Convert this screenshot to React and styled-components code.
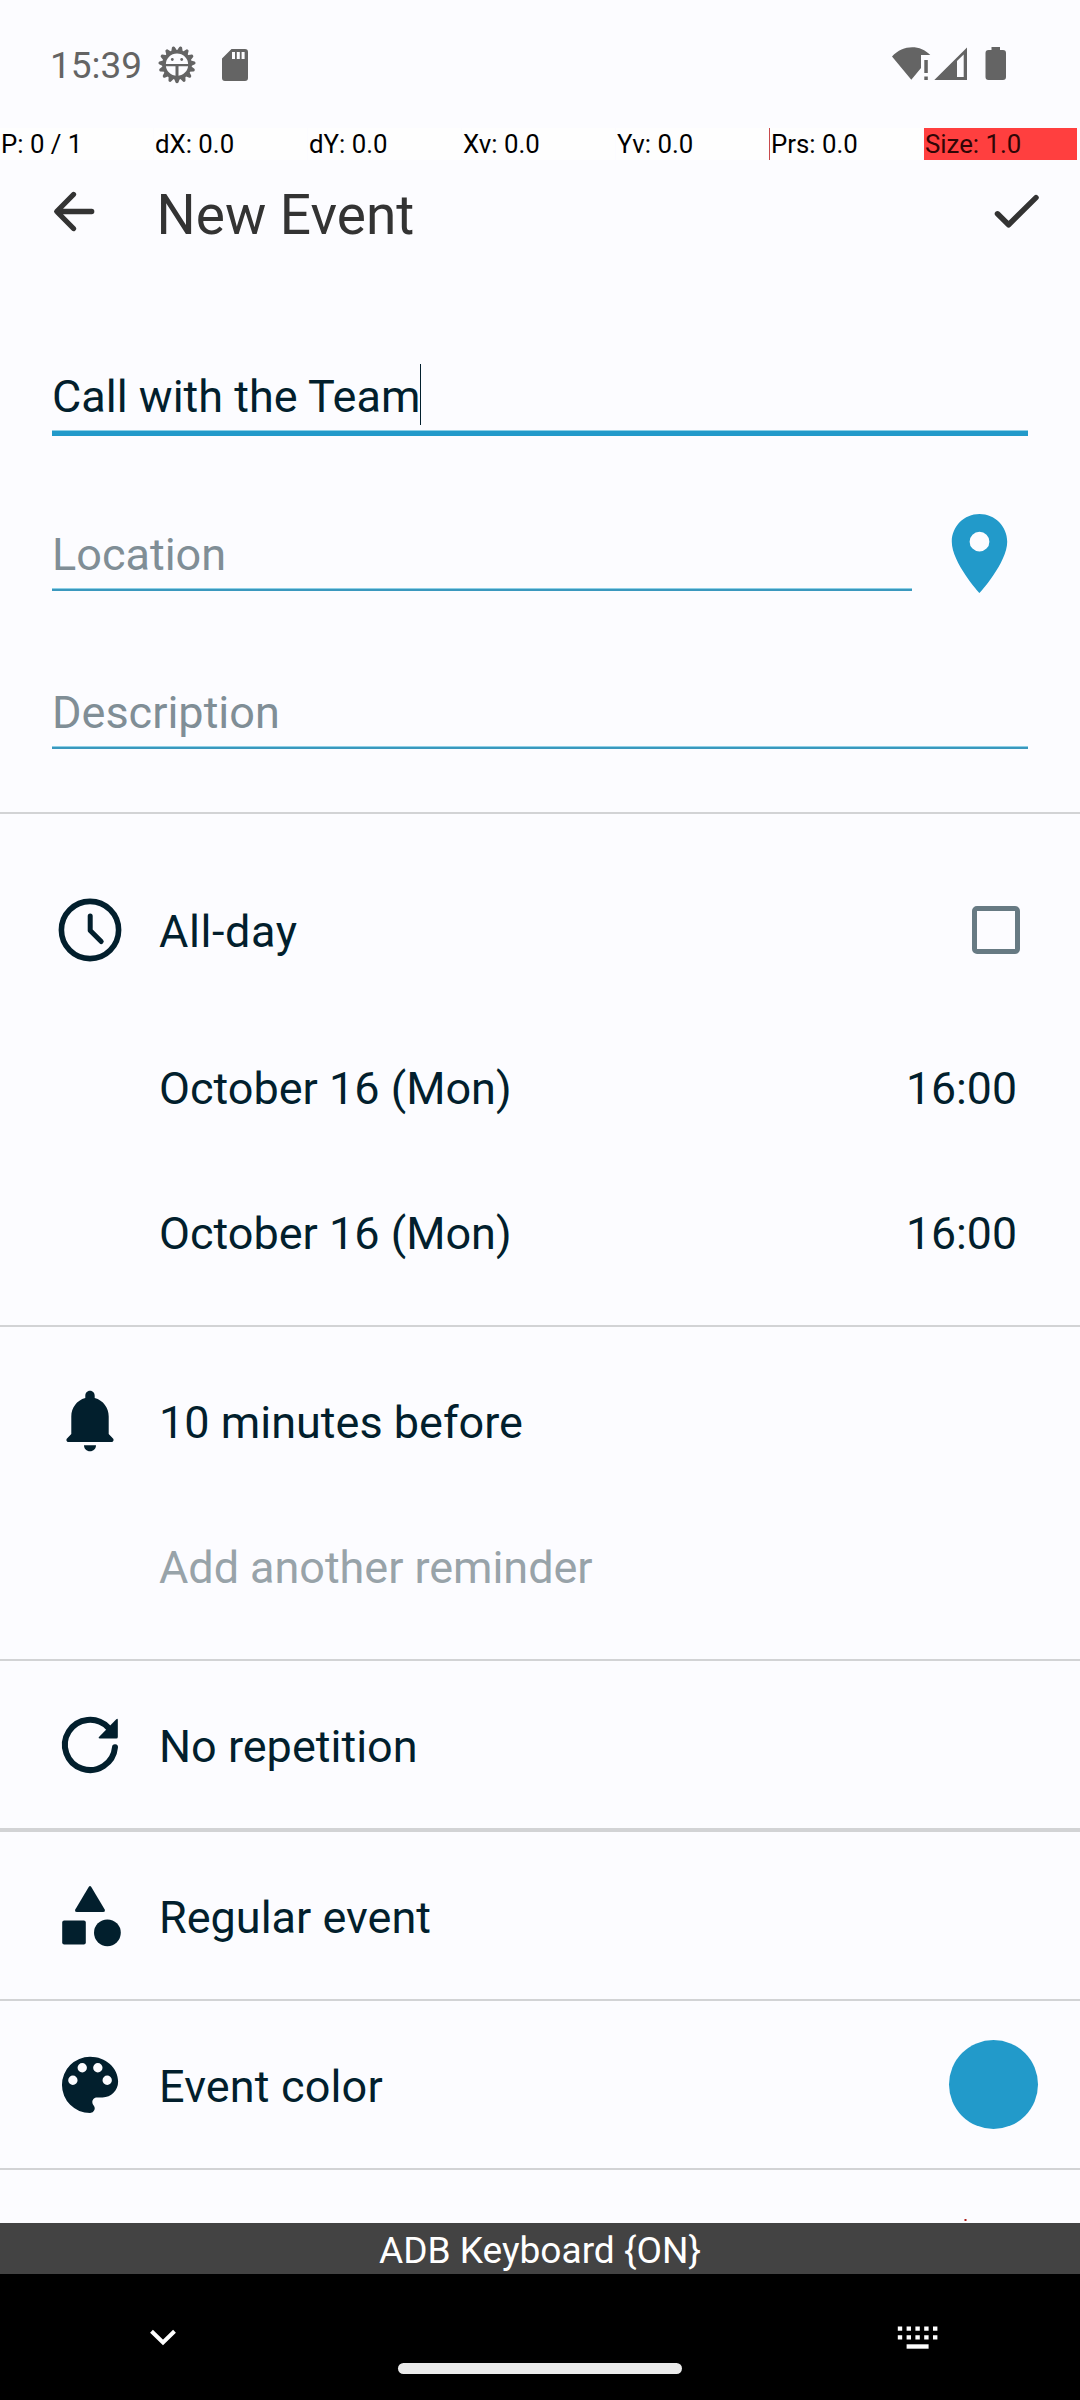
import React from 'react';
import styled, { createGlobalStyle } from 'styled-components';

const GlobalStyle = createGlobalStyle`
  * { box-sizing: border-box; }
  body { margin: 0; background: #fcfcff; }
`;

const ACCENT = '#229aca';
const INK = '#021f2d';

const Screen = styled.div`
  width: 1080px;
  height: 2400px;
  display: flex;
  flex-direction: column;
  overflow: hidden;
  background: #fcfcff;
  color: ${INK};
  font-family: Roboto, 'Liberation Sans', sans-serif;
`;

const StatusBar = styled.header`
  height: 128px;
  display: flex;
  align-items: flex-start;
  padding: 40px 72px 0 50px;
  color: #646464;
`;

const Clock = styled.span`
  width: 108px;
  padding-top: 1px;
  font-size: 37px;
  line-height: 50px;
  white-space: nowrap;
`;

const StatusIcons = styled.div`
  display: flex;
  height: 50px;
`;

const Spacer = styled.div`
  flex: 1;
`;

const PointerBar = styled.div`
  height: 32px;
  display: flex;
  flex: none;
`;

const PointerCell = styled.span`
  width: 153px;
  margin-right: 1px;
  height: 32px;
  padding-left: 1px;
  line-height: 33px;
  font-size: 25.8px;
  white-space: nowrap;
  color: ${(p) => (p.$hot ? '#300606' : '#000')};
  background: ${(p) => (p.$hot ? '#ff3f3f' : '#fefefe')};
  box-shadow: ${(p) => (p.$edge ? '-1px 0 0 #c84a4c' : 'none')};
`;

const Toolbar = styled.div`
  height: 168px;
  flex: none;
  display: flex;
  padding: 20px 31px 0 42px;
  color: #333;
`;

const Title = styled.h1`
  flex: 1;
  margin: 0 0 0 48.500px;
  font-size: 55px;
  font-weight: 400;
  line-height: 70px;
`;

const Fields = styled.div`
  height: 484px;
  flex: none;
  padding: 0 52px;
`;

const FieldRow = styled.div`
  display: flex;
  height: 158px;
`;

const Field = styled.div`
  width: ${(p) => p.$width || 976}px;
  height: ${(p) => (p.$active ? 108 : 105)}px;
  padding-top: 38px;
  font-size: 45px;
  line-height: 61px;
  white-space: nowrap;
  color: ${(p) => (p.$active ? INK : '#808e96')};
  border-bottom: ${(p) => (p.$active ? `5px solid ${ACCENT}` : '2px solid #3a98be')};
  box-shadow: inset 0 -1px 0 #8fd0e6;
`;

const Caret = styled.span`
  display: inline-block;
  width: 1px;
  height: 61px;
  margin-top: -2px;
  vertical-align: top;
  background: ${INK};
`;

const PinSlot = styled.div`
  padding: 20px 0 0 20px;
  color: ${ACCENT};
`;

const Section = styled.section`
  height: ${(p) => p.$height}px;
  flex: none;
  padding-top: ${(p) => p.$top || 0}px;
  border-top: ${(p) => p.$line || 2}px solid #d2d3d5;
`;

const Row = styled.div`
  height: ${(p) => p.$height || 145}px;
  display: grid;
  grid-template-columns: 109px 1fr auto;
  align-items: center;
  padding: 0 ${(p) => p.$right || 63}px 0 50px;
`;

const IconSlot = styled.div`
  width: 80px;
  height: 80px;
`;

const Label = styled.span`
  padding-top: 4px;
  font-size: 45px;
  line-height: 60px;
  letter-spacing: ${(p) => p.$tracking || 0}px;
  white-space: nowrap;
  color: ${(p) => (p.$muted ? '#98a3a9' : INK)};
`;

const Time = styled(Label)`
  font-size: 44.6px;
`;

const Checkbox = styled.span`
  width: 48px;
  height: 48px;
  border: 5.5px solid #677a83;
  border-radius: 5px;
`;

const Swatch = styled.span`
  width: 89px;
  height: 89px;
  border-radius: 50%;
  background: ${ACCENT};
`;

const NextRow = styled.div`
  height: 53px;
  display: flex;
  align-items: flex-end;
  padding: 0 0 2px 964px;
`;

const IconTip = styled.span`
  width: 3px;
  height: 2px;
  background: linear-gradient(90deg, #d98a87 0 1px, #a5201c 1px 2px, #d98a87 2px);
`;

const KeyboardBanner = styled.div`
  height: 51px;
  flex: none;
  padding-top: 1px;
  background: #434343;
  color: #fff;
  text-align: center;
  font-size: 37.1px;
  line-height: 54px;
`;

const NavBar = styled.footer`
  height: 126px;
  flex: none;
  display: grid;
  grid-template-columns: 326px 1fr 326px;
  background: #000;
  color: #fff;
`;

const NavSlot = styled.div`
  padding: 44px 0 0 ${(p) => p.$left}px;
`;

const HomePill = styled.div`
  align-self: end;
  justify-self: center;
  width: 284px;
  height: 11px;
  margin-bottom: 26px;
  border-radius: 6px;
  background: #ebebeb;
`;

const Glyph = styled.svg`
  display: block;
  overflow: visible;
`;

const teeth = Array.from({ length: 15 }, (_, i) => i * 24 + 12);

function BugGear() {
  return (
    <Glyph width="38" height="50" viewBox="158 40 38 50" fill="currentColor">
      <circle cx="177" cy="64.7" r="13" fill="none" stroke="currentColor" strokeWidth="3.6" />
      <path d="M164 63.900h26v2.400h-11.500V78h-3V66.300H164z" />
      {teeth.map((a) => (
        <path key={a} d="M173.900 51.200l1.700-4.300q.3-.8 1.400-.8t1.400.8l1.700 4.300z" transform={`rotate(${a} 177 64.7)`} />
      ))}
      <circle cx="172.3" cy="59.500" r="1.400" />
      <circle cx="181.700" cy="59.500" r="1.400" />
    </Glyph>
  );
}

function SdCard() {
  return (
    <Glyph width="90" height="50" viewBox="196 40 90 50">
      <path fill="currentColor" fillRule="evenodd" d="M231.500 49H245q3 0 3 3v26q0 3-3 3h-20q-3 0-3-3V58.500zM232 52v7h3v-7zM236.800 52v7h3v-7zM241.600 52v7h3v-7z" />
    </Glyph>
  );
}

function Connectivity() {
  return (
    <Glyph width="120" height="50" viewBox="888 40 120 50" fill="currentColor">
      <path d="M892 56.500C903 44.500 920 44.300 930.300 55H921v13l-9.700 11.800z" />
      <path d="M924.300 60h3.500v13h-3.500zM924.300 76.500h3.500V80h-3.500z" />
      <path fillRule="evenodd" d="M934.300 80L967 47.500V80zM957 61v16h6.700V54.500z" />
      <path d="M991.500 47h8.500v3h3q3 0 3 3v24q0 3-3 3h-14.500q-3 0-3-3V53q0-3 3-3h3z" />
    </Glyph>
  );
}

function BackArrow() {
  return (
    <Glyph width="66" height="66" viewBox="42 180 66 66" fill="none" stroke="currentColor" strokeWidth="5.300" strokeLinecap="round" strokeLinejoin="round">
      <path d="M91.700 211.500H57M73.500 194.500L56.700 211.500L73.500 228.500" />
    </Glyph>
  );
}

function CheckMark() {
  return (
    <Glyph width="63" height="66" viewBox="986 180 63 66" fill="none" stroke="currentColor" strokeWidth="5.500" strokeLinecap="round" strokeLinejoin="round">
      <path d="M997.500 213.800L1008.600 224.800L1036 197.600" />
    </Glyph>
  );
}

function Pin() {
  return (
    <Glyph width="95" height="95" viewBox="0 0 24 24" fill="currentColor">
      <path d="M12 2C8.130 2 5 5.130 5 9c0 5.250 7 13 7 13s7-7.750 7-13c0-3.870-3.130-7-7-7zm0 9.500a2.500 2.500 0 0 1 0-5 2.500 2.500 0 0 1 0 5z" />
    </Glyph>
  );
}

function ClockIcon() {
  return (
    <Glyph width="80" height="80" viewBox="0 0 80 80" fill="none" stroke="currentColor" strokeLinecap="round" strokeLinejoin="round">
      <circle cx="40" cy="40" r="28.600" strokeWidth="5.600" />
      <path strokeWidth="5" d="M40.200 26v14.500L51.200 51.500" />
    </Glyph>
  );
}

function Bell() {
  return (
    <Glyph width="80" height="80" viewBox="50 1381 80 80" fill="currentColor">
      <path d="M90 1390.700c-3 0-4.700 2.400-4.700 5v2.300c-8.600 2.300-14 10-14 18.500v17.500l-4.300 4.500c-1.300 1.600-.3 3.500 1.500 3.500h43c1.800 0 2.800-1.900 1.500-3.500l-4.300-4.500v-17.500c0-8.500-5.400-16.200-14-18.500v-2.300c0-2.600-1.700-5-4.700-5zM84 1445.300h12c0 3.500-2.600 6-6 6s-6-2.500-6-6z" />
    </Glyph>
  );
}

function Repeat() {
  return (
    <Glyph width="80" height="80" viewBox="50 1704.500 80 80">
      <path fill="none" stroke="currentColor" strokeWidth="6" strokeLinecap="round" d="M115 1746.700A25.100 25.100 0 1 1 108 1726.900" />
      <path fill="currentColor" d="M116.300 1718.800q1.500-1.500 1.500.6V1736.500q0 1.500-1.500 1.500H99.800q-2-.2-.6-1.800z" />
    </Glyph>
  );
}

function Shapes() {
  return (
    <Glyph width="80" height="80" viewBox="50 1876 80 80" fill="currentColor">
      <path d="M88.700 1887q1.300-1.800 2.600 0l13.400 22.500q.8 2.500-1.500 2.500H76.800q-2.300 0-1.500-2.500z" />
      <rect x="62.200" y="1920.600" width="23.600" height="24" rx="2" />
      <circle cx="107.400" cy="1932.800" r="13.400" />
    </Glyph>
  );
}

function Palette() {
  return (
    <Glyph width="80" height="80" viewBox="50 2044.500 80 80">
      <g transform="translate(52.600 2047) scale(3.120)">
        <path fill="currentColor" d="M12 3a9 9 0 0 0 0 18c.830 0 1.500-.670 1.500-1.500 0-.390-.150-.740-.390-1.010-.230-.260-.380-.610-.380-.990 0-.830.670-1.500 1.500-1.500H16c2.760 0 5-2.240 5-5 0-4.420-4.030-8-9-8zm-5.500 9a1.500 1.500 0 0 1 0-3 1.500 1.500 0 0 1 0 3zm3-4a1.500 1.500 0 0 1 0-3 1.500 1.500 0 0 1 0 3zm5 0a1.500 1.500 0 0 1 0-3 1.500 1.500 0 0 1 0 3zm3 4a1.500 1.500 0 0 1 0-3 1.500 1.500 0 0 1 0 3z" />
      </g>
    </Glyph>
  );
}

function ChevronDown() {
  return (
    <Glyph width="40" height="40" viewBox="143 2318 40 40" fill="none" stroke="currentColor" strokeWidth="4">
      <path d="M151.500 2331.200L163 2342.500L174.500 2331.200" />
    </Glyph>
  );
}

function KeyboardDots() {
  const columns = [897.8, 906.6, 915.4, 924.2, 933];
  return (
    <Glyph width="60" height="40" viewBox="888 2318 60 40" fill="currentColor">
      {columns.map((x) => (
        <path key={x} d={`M${x} 2326.400h4.400v4.400h-4.400zM${x} 2335.200h4.400v4.400h-4.400z`} />
      ))}
      <path d="M906.600 2344.300h22v4.400h-22z" />
    </Glyph>
  );
}

const pointerCells = ['P: 0 / 1', 'dX: 0.0', 'dY: 0.0', 'Xv: 0.0', 'Yv: 0.0', 'Prs: 0.0', 'Size: 1.0'];

function EventRow({ icon, label, muted, tracking, height, right, children }) {
  return (
    <Row $height={height} $right={right}>
      <IconSlot>{icon}</IconSlot>
      <Label $muted={muted} $tracking={tracking}>{label}</Label>
      {children}
    </Row>
  );
}

export default function App() {
  return (
    <Screen>
      <GlobalStyle />
      <StatusBar>
        <Clock>15:39</Clock>
        <StatusIcons>
          <BugGear />
          <SdCard />
        </StatusIcons>
        <Spacer />
        <StatusIcons>
          <Connectivity />
        </StatusIcons>
      </StatusBar>
      <PointerBar>
        {pointerCells.map((text, i) => (
          <PointerCell key={text} $edge={i === 5} $hot={i === 6}>{text}</PointerCell>
        ))}
      </PointerBar>
      <Toolbar>
        <BackArrow />
        <Title>New Event</Title>
        <CheckMark />
      </Toolbar>
      <Fields>
        <FieldRow>
          <Field $active>Call with the Team<Caret /></Field>
        </FieldRow>
        <FieldRow>
          <Field $width={860}>Location</Field>
          <PinSlot><Pin /></PinSlot>
        </FieldRow>
        <FieldRow>
          <Field>Description</Field>
        </FieldRow>
      </Fields>
      <Section $height={513} $top={31}>
        <EventRow icon={<ClockIcon />} label="All-day" tracking={0.6} height={169} right={60}><Checkbox /></EventRow>
        <EventRow label="October 16 (Mon)"><Time>16:00</Time></EventRow>
        <EventRow label="October 16 (Mon)"><Time>16:00</Time></EventRow>
      </Section>
      <Section $height={334} $top={21}>
        <EventRow icon={<Bell />} label="10 minutes before" />
        <EventRow label="Add another reminder" tracking={-0.05} muted />
      </Section>
      <Section $height={169}>
        <EventRow icon={<Repeat />} label="No repetition" height={167} />
      </Section>
      <Section $height={171} $line={4}>
        <EventRow icon={<Shapes />} label="Regular event" height={167} />
      </Section>
      <Section $height={169}>
        <EventRow icon={<Palette />} label="Event color" tracking={0.15} height={167} right={42}><Swatch /></EventRow>
      </Section>
      <Section $height={55}>
        <NextRow><IconTip /></NextRow>
      </Section>
      <KeyboardBanner>ADB Keyboard {'{ON}'}</KeyboardBanner>
      <NavBar>
        <NavSlot $left={143}><ChevronDown /></NavSlot>
        <HomePill />
        <NavSlot $left={134}><KeyboardDots /></NavSlot>
      </NavBar>
    </Screen>
  );
}
